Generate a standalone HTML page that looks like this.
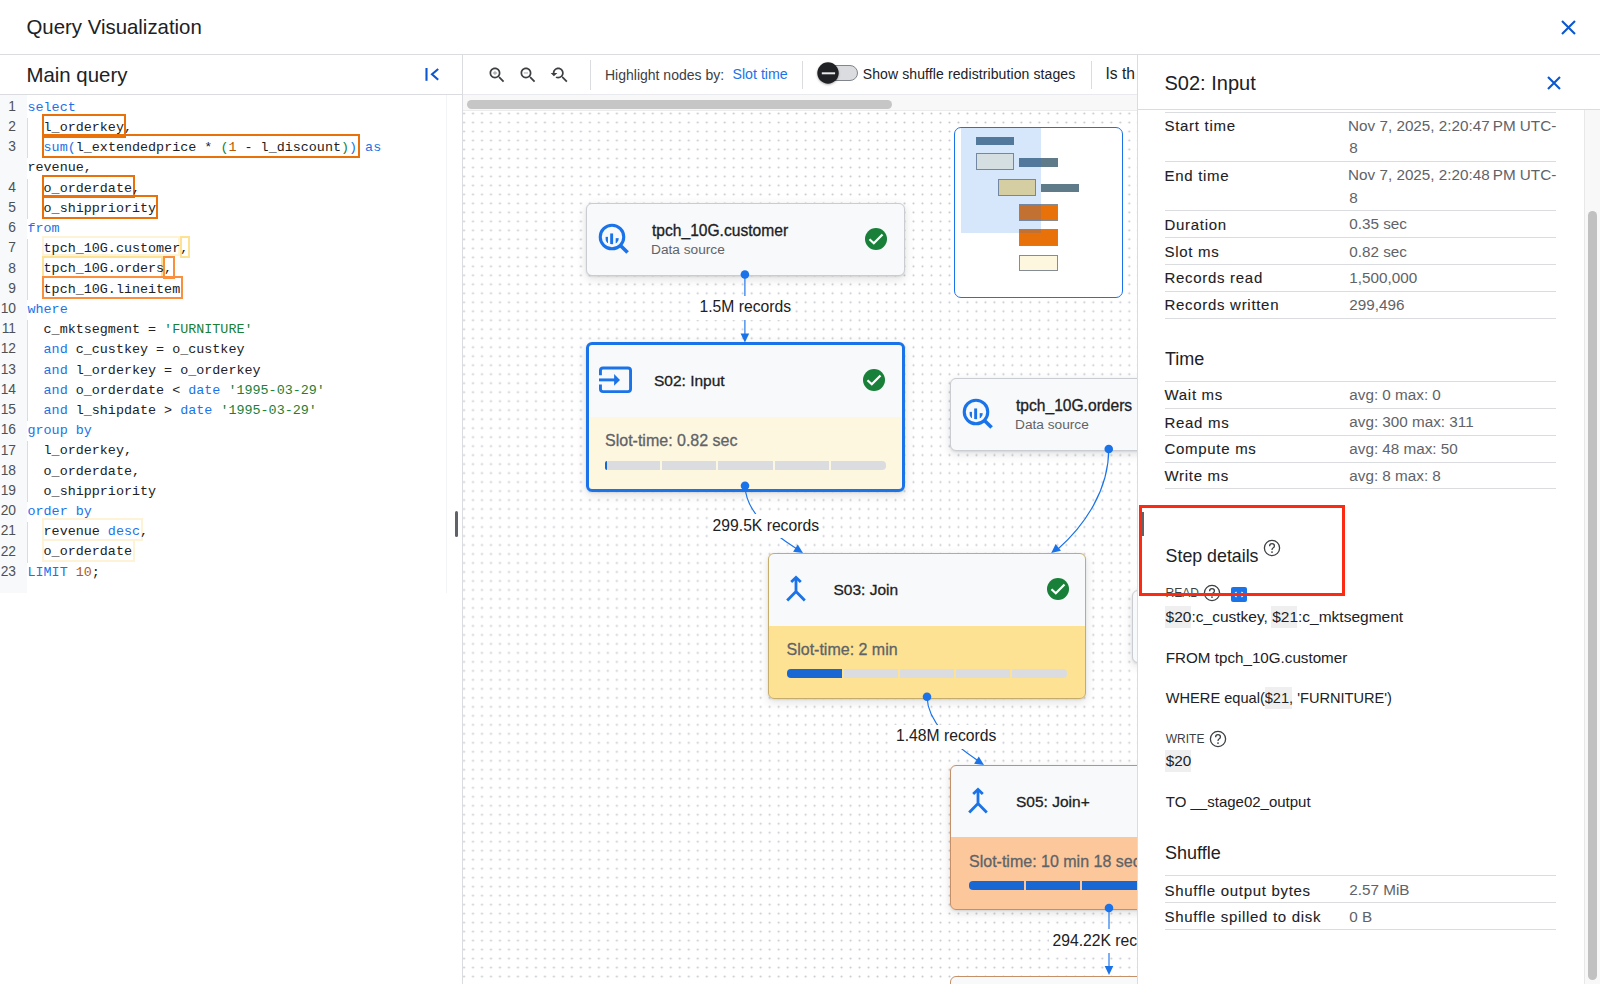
<!DOCTYPE html>
<html><head><meta charset="utf-8"><style>
*{box-sizing:border-box;margin:0;padding:0}
html,body{width:1600px;height:984px;overflow:hidden;background:#fff;font-family:"Liberation Sans",sans-serif;color:#202124;position:relative}
.t{position:absolute;white-space:pre;line-height:1}
.r{position:absolute}
svg{position:absolute;overflow:visible}
.ln{position:absolute;left:0;width:15.8px;text-align:right;font-family:"Liberation Sans",sans-serif;font-size:13.8px;color:#4d5156;line-height:20px;letter-spacing:-0.2px;margin-top:-0.8px}
.cl{position:absolute;left:27.5px;font-family:"Liberation Mono",monospace;font-size:13.4px;color:#202124;line-height:20px;white-space:pre}
.ig{position:absolute;left:27px;width:1px;background:#dadce0}
.bx{position:absolute;border:2px solid #e8710a}
.k{color:#1a73e8}.s{color:#188038}.n{color:#b55908}
</style></head><body>
<div class="r" style="left:463px;top:111px;width:674px;height:873px;background:#fff"></div>
<svg style="left:463px;top:111px" width="674" height="873"><defs><pattern id="dp" patternUnits="userSpaceOnUse" x="5.505" y="-1.995" width="8.99" height="8.99"><circle cx="4.495" cy="4.495" r="1.05" fill="#c6c9ce"/></pattern></defs><rect width="100%" height="100%" fill="url(#dp)"/></svg>
<div class="r" style="left:586.00px;top:203.00px;width:318.50px;height:73.00px;background:#f8f9fa;border:1px solid #c9ccd1;border-radius:6px;box-shadow:0 1px 2px rgba(60,64,67,.12),0 3px 8px 1px rgba(60,64,67,.13)"></div>
<svg style="left:598px;top:223px" width="32" height="32" viewBox="0 0 32 32"><defs><clipPath id="bqc612"><circle cx="14" cy="14" r="7.3"/></clipPath></defs><circle cx="14" cy="14" r="11.75" stroke="#1a73e8" stroke-width="3.1" fill="none"/><path d="M22.2 22.2L29.6 29.6" stroke="#1a73e8" stroke-width="3.6" fill="none"/><g clip-path="url(#bqc612)" fill="#1a73e8"><rect x="7.65" y="13.85" width="2.3" height="9"/><rect x="12.2" y="10.45" width="2.9" height="12"/><rect x="17.7" y="15.15" width="3" height="8"/></g></svg>
<div class="t" style="left:652.00px;top:222.79px;font-size:15.6px;color:#202124;-webkit-text-stroke:0.3px #202124">tpch_10G.customer</div>
<div class="t" style="left:651.00px;top:243.40px;font-size:13.7px;color:#5f6368">Data source</div>
<svg style="left:865.3px;top:227.7px" width="22" height="22" viewBox="0 0 22 22"><circle cx="11" cy="11" r="11" fill="#188038"/><path d="M4.5 11.2L8.8 15.3L17.5 6.5" stroke="#fff" stroke-width="2.2" fill="none"/></svg>
<div class="r" style="left:950.00px;top:378.00px;width:318.50px;height:73.00px;background:#f8f9fa;border:1px solid #c9ccd1;border-radius:6px;box-shadow:0 1px 2px rgba(60,64,67,.12),0 3px 8px 1px rgba(60,64,67,.13)"></div>
<svg style="left:962px;top:398px" width="32" height="32" viewBox="0 0 32 32"><defs><clipPath id="bqc976"><circle cx="14" cy="14" r="7.3"/></clipPath></defs><circle cx="14" cy="14" r="11.75" stroke="#1a73e8" stroke-width="3.1" fill="none"/><path d="M22.2 22.2L29.6 29.6" stroke="#1a73e8" stroke-width="3.6" fill="none"/><g clip-path="url(#bqc976)" fill="#1a73e8"><rect x="7.65" y="13.85" width="2.3" height="9"/><rect x="12.2" y="10.45" width="2.9" height="12"/><rect x="17.7" y="15.15" width="3" height="8"/></g></svg>
<div class="t" style="left:1016.00px;top:397.79px;font-size:15.6px;color:#202124;-webkit-text-stroke:0.3px #202124">tpch_10G.orders</div>
<div class="t" style="left:1015.00px;top:418.40px;font-size:13.7px;color:#5f6368">Data source</div>
<svg style="left:1229.3px;top:402.7px" width="22" height="22" viewBox="0 0 22 22"><circle cx="11" cy="11" r="11" fill="#188038"/><path d="M4.5 11.2L8.8 15.3L17.5 6.5" stroke="#fff" stroke-width="2.2" fill="none"/></svg>
<div class="r" style="left:1131.60px;top:589.50px;width:318.50px;height:73.00px;background:#f8f9fa;border:1px solid #c9ccd1;border-radius:6px;box-shadow:0 1px 2px rgba(60,64,67,.12),0 3px 8px 1px rgba(60,64,67,.13)"></div>
<svg style="left:1143.6px;top:609.5px" width="32" height="32" viewBox="0 0 32 32"><defs><clipPath id="bqc1157"><circle cx="14" cy="14" r="7.3"/></clipPath></defs><circle cx="14" cy="14" r="11.75" stroke="#1a73e8" stroke-width="3.1" fill="none"/><path d="M22.2 22.2L29.6 29.6" stroke="#1a73e8" stroke-width="3.6" fill="none"/><g clip-path="url(#bqc1157)" fill="#1a73e8"><rect x="7.65" y="13.85" width="2.3" height="9"/><rect x="12.2" y="10.45" width="2.9" height="12"/><rect x="17.7" y="15.15" width="3" height="8"/></g></svg>
<div class="t" style="left:1197.60px;top:609.29px;font-size:15.6px;color:#202124;-webkit-text-stroke:0.3px #202124">tpch_10G.lineitem</div>
<div class="t" style="left:1196.60px;top:629.90px;font-size:13.7px;color:#5f6368">Data source</div>
<svg style="left:1410.8999999999999px;top:614.2px" width="22" height="22" viewBox="0 0 22 22"><circle cx="11" cy="11" r="11" fill="#188038"/><path d="M4.5 11.2L8.8 15.3L17.5 6.5" stroke="#fff" stroke-width="2.2" fill="none"/></svg>
<div class="r" style="left:586.00px;top:342.00px;width:318.50px;height:150.00px;background:linear-gradient(#f8f9fa 0,#f8f9fa 72.2px,#fef7e0 72.2px);border:3px solid #1a73e8;border-radius:6px;box-shadow:0 1px 2px rgba(60,64,67,.12),0 3px 8px 1px rgba(60,64,67,.13)"></div>
<svg style="left:599px;top:365.7px" width="34" height="28" viewBox="0 0 34 28"><path d="M1.45 9.2V4.6Q1.45 1.95 4.1 1.95H28.9Q31.55 1.95 31.55 4.6V23Q31.55 25.65 28.9 25.65H4.1Q1.45 25.65 1.45 23V18.4" stroke="#1a73e8" stroke-width="2.9" fill="none"/><path d="M0 13.9H16.5" stroke="#1a73e8" stroke-width="2.9"/><path d="M15.1 7.9L21 13.9L15.1 19.8z" fill="#1a73e8"/></svg>
<div class="t" style="left:654.00px;top:372.88px;font-size:15.5px;color:#202124;-webkit-text-stroke:0.3px #202124">S02: Input</div>
<div class="t" style="left:605.00px;top:433.45px;font-size:16px;color:#5f6368;-webkit-text-stroke:0.3px #5f6368">Slot-time: 0.82 sec</div>
<div class="r" style="left:605.00px;top:460.60px;width:55.20px;height:9.00px;background:#dadce0;border-radius:4px 0 0 4px"></div>
<div class="r" style="left:605.00px;top:460.60px;width:1.93px;height:9.00px;background:#0b57d0;background:#1967d2;border-radius:4px 0 0 4px"></div>
<div class="r" style="left:662.20px;top:460.60px;width:54.20px;height:9.00px;background:#dadce0;border-radius:0"></div>
<div class="r" style="left:718.40px;top:460.60px;width:54.20px;height:9.00px;background:#dadce0;border-radius:0"></div>
<div class="r" style="left:774.60px;top:460.60px;width:54.20px;height:9.00px;background:#dadce0;border-radius:0"></div>
<div class="r" style="left:830.80px;top:460.60px;width:55.20px;height:9.00px;background:#dadce0;border-radius:0 4px 4px 0"></div>
<svg style="left:863.1px;top:368.7px" width="22" height="22" viewBox="0 0 22 22"><circle cx="11" cy="11" r="11" fill="#188038"/><path d="M4.5 11.2L8.8 15.3L17.5 6.5" stroke="#fff" stroke-width="2.2" fill="none"/></svg>
<div class="r" style="left:767.50px;top:553.00px;width:318.50px;height:146.00px;background:linear-gradient(#f8f9fa 0,#f8f9fa 72.4px,#fde293 72.4px);border:1px solid #c5ac6a;border-radius:6px;box-shadow:0 1px 2px rgba(60,64,67,.12),0 3px 8px 1px rgba(60,64,67,.13)"></div>
<svg style="left:783.8px;top:575px" width="24" height="30" viewBox="0 0 24 30"><path d="M12 3V17.2M12 16.4L3.2 25.4M12 16.4L20.8 25.4" stroke="#1a73e8" stroke-width="2.8" fill="none"/><path d="M7.2 6.9L12 2.4L16.8 6.9" stroke="#1a73e8" stroke-width="2.8" fill="none" stroke-linejoin="miter"/></svg>
<div class="t" style="left:833.50px;top:581.88px;font-size:15.5px;color:#202124;-webkit-text-stroke:0.3px #202124">S03: Join</div>
<div class="t" style="left:786.50px;top:642.45px;font-size:16px;color:#5f6368;-webkit-text-stroke:0.3px #5f6368">Slot-time: 2 min</div>
<div class="r" style="left:786.50px;top:669.40px;width:55.20px;height:9.00px;background:#dadce0;border-radius:4px 0 0 4px"></div>
<div class="r" style="left:786.50px;top:669.40px;width:55.20px;height:9.00px;background:#0b57d0;background:#1967d2;border-radius:4px 0 0 4px"></div>
<div class="r" style="left:843.70px;top:669.40px;width:54.20px;height:9.00px;background:#dadce0;border-radius:0"></div>
<div class="r" style="left:899.90px;top:669.40px;width:54.20px;height:9.00px;background:#dadce0;border-radius:0"></div>
<div class="r" style="left:956.10px;top:669.40px;width:54.20px;height:9.00px;background:#dadce0;border-radius:0"></div>
<div class="r" style="left:1012.30px;top:669.40px;width:55.20px;height:9.00px;background:#dadce0;border-radius:0 4px 4px 0"></div>
<svg style="left:1047.0px;top:577.7px" width="22" height="22" viewBox="0 0 22 22"><circle cx="11" cy="11" r="11" fill="#188038"/><path d="M4.5 11.2L8.8 15.3L17.5 6.5" stroke="#fff" stroke-width="2.2" fill="none"/></svg>
<div class="r" style="left:950.00px;top:765.00px;width:318.50px;height:145.00px;background:linear-gradient(#f8f9fa 0,#f8f9fa 71.3px,#fcc89b 71.3px);border:1px solid #c4906a;border-radius:6px;box-shadow:0 1px 2px rgba(60,64,67,.12),0 3px 8px 1px rgba(60,64,67,.13)"></div>
<svg style="left:966.3px;top:787px" width="24" height="30" viewBox="0 0 24 30"><path d="M12 3V17.2M12 16.4L3.2 25.4M12 16.4L20.8 25.4" stroke="#1a73e8" stroke-width="2.8" fill="none"/><path d="M7.2 6.9L12 2.4L16.8 6.9" stroke="#1a73e8" stroke-width="2.8" fill="none" stroke-linejoin="miter"/></svg>
<div class="t" style="left:1016.00px;top:793.88px;font-size:15.5px;color:#202124;-webkit-text-stroke:0.3px #202124">S05: Join+</div>
<div class="t" style="left:969.00px;top:854.45px;font-size:16px;color:#5f6368;-webkit-text-stroke:0.3px #5f6368">Slot-time: 10 min 18 sec</div>
<div class="r" style="left:969.00px;top:881.40px;width:55.20px;height:9.00px;background:#dadce0;border-radius:4px 0 0 4px"></div>
<div class="r" style="left:969.00px;top:881.40px;width:55.20px;height:9.00px;background:#0b57d0;background:#1967d2;border-radius:4px 0 0 4px"></div>
<div class="r" style="left:1026.20px;top:881.40px;width:54.20px;height:9.00px;background:#dadce0;border-radius:0"></div>
<div class="r" style="left:1026.20px;top:881.40px;width:54.20px;height:9.00px;background:#0b57d0;background:#1967d2;border-radius:0"></div>
<div class="r" style="left:1082.40px;top:881.40px;width:54.20px;height:9.00px;background:#dadce0;border-radius:0"></div>
<div class="r" style="left:1082.40px;top:881.40px;width:54.20px;height:9.00px;background:#0b57d0;background:#1967d2;border-radius:0"></div>
<div class="r" style="left:1138.60px;top:881.40px;width:54.20px;height:9.00px;background:#dadce0;border-radius:0"></div>
<div class="r" style="left:1138.60px;top:881.40px;width:54.20px;height:9.00px;background:#0b57d0;background:#1967d2;border-radius:0"></div>
<div class="r" style="left:1194.80px;top:881.40px;width:55.20px;height:9.00px;background:#dadce0;border-radius:0 4px 4px 0"></div>
<div class="r" style="left:1194.80px;top:881.40px;width:55.20px;height:9.00px;background:#0b57d0;background:#1967d2;border-radius:0 4px 4px 0"></div>
<div class="r" style="left:950.00px;top:975.50px;width:319.00px;height:124.50px;background:#f8f9fa;border:1px solid #c4906a;border-radius:6px"></div>
<svg style="left:0;top:0" width="1600" height="984" viewBox="0 0 1600 984"><path d="M744.9 274.5V336" stroke="#1a73e8" stroke-width="1.15" fill="none"/><path d="M744.90 342.50L740.60 333.50L749.20 333.50z" fill="#1a73e8"/><circle cx="744.9" cy="274.5" r="4.3" fill="#1a73e8"/><path d="M745 486C746 512 770 532 797 549" stroke="#1a73e8" stroke-width="1.15" fill="none"/><path d="M803.00 553.00L793.11 551.70L797.79 544.49z" fill="#1a73e8"/><circle cx="745" cy="485.7" r="4.3" fill="#1a73e8"/><path d="M1108.75 449C1108.75 490 1085 525 1058 549" stroke="#1a73e8" stroke-width="1.15" fill="none"/><path d="M1051.20 553.00L1055.64 544.07L1060.94 550.85z" fill="#1a73e8"/><circle cx="1108.75" cy="449" r="4.3" fill="#1a73e8"/><path d="M927 697C928 723 952 743 977 760" stroke="#1a73e8" stroke-width="1.15" fill="none"/><path d="M984.00 765.00L974.11 763.70L978.79 756.49z" fill="#1a73e8"/><circle cx="927" cy="696.8" r="4.3" fill="#1a73e8"/><path d="M1109 908V968" stroke="#1a73e8" stroke-width="1.15" fill="none"/><path d="M1109.00 975.00L1104.70 966.00L1113.30 966.00z" fill="#1a73e8"/><circle cx="1109" cy="908" r="4.3" fill="#1a73e8"/></svg>
<div class="r" style="left:695.50px;top:295.70px;width:99.00px;height:24.00px;background:#fff"></div>
<div class="t" style="left:699.50px;top:299.41px;font-size:15.7px;color:#202124">1.5M records</div>
<div class="r" style="left:708.60px;top:513.80px;width:113.00px;height:24.00px;background:#fff"></div>
<div class="t" style="left:712.60px;top:517.51px;font-size:15.7px;color:#202124">299.5K records</div>
<div class="r" style="left:892.00px;top:724.50px;width:109.00px;height:24.00px;background:#fff"></div>
<div class="t" style="left:896.00px;top:728.21px;font-size:15.7px;color:#202124">1.48M records</div>
<div class="r" style="left:1048.50px;top:929.40px;width:121.00px;height:24.00px;background:#fff"></div>
<div class="t" style="left:1052.50px;top:933.11px;font-size:15.7px;color:#202124">294.22K records</div>
<div class="r" style="left:954.00px;top:127.00px;width:168.50px;height:170.50px;background:#fff;border:1px solid #1a73e8;border-radius:7px"></div>
<div class="r" style="left:975.60px;top:136.90px;width:38.40px;height:7.90px;background:#5f7b8a;"></div>
<div class="r" style="left:975.60px;top:153.30px;width:38.40px;height:16.90px;background:#fef7e0;border:1.5px solid #858c94;"></div>
<div class="r" style="left:1019.20px;top:158.00px;width:38.60px;height:8.60px;background:#5f7b8a;"></div>
<div class="r" style="left:997.60px;top:179.20px;width:38.00px;height:16.40px;background:#fde293;border:1.5px solid #858c94;"></div>
<div class="r" style="left:1041.00px;top:183.90px;width:38.40px;height:7.90px;background:#5f7b8a;"></div>
<div class="r" style="left:1019.20px;top:204.20px;width:38.60px;height:16.40px;background:#e8710a;border:1.5px solid #858c94;"></div>
<div class="r" style="left:1019.20px;top:229.40px;width:38.60px;height:16.60px;background:#e8710a;border:1.5px solid #858c94;"></div>
<div class="r" style="left:1019.20px;top:254.80px;width:38.60px;height:16.50px;background:#fef7e0;border:1.5px solid #858c94;"></div>
<div class="r" style="left:961.00px;top:127.90px;width:80.20px;height:104.90px;background:rgba(26,115,232,.18)"></div>
<div class="r" style="left:463.00px;top:55.00px;width:674.00px;height:40.00px;background:#fff;border-bottom:1px solid #e8eaed"></div>
<div class="r" style="left:463.00px;top:95.00px;width:674.00px;height:16.00px;background:#f8f8f8;border-bottom:1px solid #ececec"></div>
<div class="r" style="left:466.50px;top:99.50px;width:425.50px;height:9.00px;background:#c6c6c6;border-radius:5px"></div>
<svg style="left:486.52px;top:65.12px" width="20.16" height="20.16" viewBox="0 0 24 24"><path d="M15.5 14h-.79l-.28-.27C15.41 12.59 16 11.11 16 9.5 16 5.91 13.09 3 9.5 3S3 5.91 3 9.5 5.91 16 9.5 16c1.61 0 3.09-.59 4.23-1.57l.27.28v.79l5 4.99L20.49 19l-4.99-5zm-6 0C7.01 14 5 11.990 5 9.5S7.01 5 9.5 5 14 7.01 14 9.5 11.99 14 9.5 14z" fill="#3c4043"/><path d="M12 10h-2v2H9v-2H7V9h2V7h1v2h2v1z" fill="#3c4043" opacity=".55"/></svg>
<svg style="left:517.92px;top:65.12px" width="20.16" height="20.16" viewBox="0 0 24 24"><path d="M15.5 14h-.79l-.28-.27C15.41 12.59 16 11.11 16 9.5 16 5.91 13.09 3 9.5 3S3 5.91 3 9.5 5.91 16 9.5 16c1.61 0 3.09-.59 4.23-1.57l.27.28v.79l5 4.99L20.49 19l-4.99-5zm-6 0C7.01 14 5 11.990 5 9.5S7.01 5 9.5 5 14 7.01 14 9.5 11.99 14 9.5 14z" fill="#3c4043"/><path d="M7 9h5v1H7z" fill="#3c4043" opacity=".55"/></svg>
<svg style="left:549.35px;top:65.12px" width="20.16" height="20.16" viewBox="0 0 24 24"><path d="M17.01 14h-.8l-.27-.27c.98-1.14 1.57-2.61 1.57-4.23 0-3.59-2.91-6.5-6.5-6.5s-6.5 3-6.5 6.5H2l3.84 4 4.16-4H6.51C6.51 7 8.53 5 11.01 5s4.5 2.01 4.5 4.5c0 2.48-2.02 4.5-4.5 4.5-.65 0-1.26-.14-1.82-.38L7.71 15.1c.97.57 2.09.9 3.3.9 1.61 0 3.08-.59 4.22-1.57l.27.27v.79l5.01 5L22 19l-4.99-5z" fill="#3c4043"/></svg>
<div class="r" style="left:589.50px;top:60.00px;width:1.00px;height:30.00px;background:#dadce0"></div>
<div class="t" style="left:605.00px;top:67.65px;font-size:14px;color:#3c4043">Highlight nodes by:</div>
<div class="t" style="left:732.50px;top:67.48px;font-size:14.2px;color:#1a73e8">Slot time</div>
<div class="r" style="left:802.00px;top:61.00px;width:1.00px;height:28.00px;background:#dadce0"></div>
<div class="r" style="left:827.00px;top:65.00px;width:30.50px;height:15.60px;background:#dadce0;border:1px solid #80868b;border-radius:8px"></div>
<svg style="left:816.4px;top:60.8px" width="24" height="24" viewBox="0 0 24 24"><circle cx="12" cy="12" r="10.7" fill="#202124" style="filter:drop-shadow(0 1px 1px rgba(0,0,0,.3))"/><path d="M5.8 12.3H19.1" stroke="#e8eaed" stroke-width="2"/></svg>
<div class="t" style="left:862.80px;top:67.15px;font-size:14px;color:#202124;letter-spacing:0.1px">Show shuffle redistribution stages</div>
<div class="r" style="left:1091.00px;top:61.00px;width:1.00px;height:28.00px;background:#dadce0"></div>
<div class="t" style="left:1105.50px;top:65.79px;font-size:15.6px;color:#202124">Is th</div>
<div class="r" style="left:0.00px;top:0.00px;width:1600.00px;height:55.00px;background:#fff;border-bottom:1px solid #dadce0"></div>
<div class="t" style="left:26.50px;top:17.13px;font-size:20.4px;color:#202124">Query Visualization</div>
<svg style="left:1561px;top:19.5px" width="15" height="15" viewBox="0 0 15 15"><path d="M1 1L14 14M14 1L1 14" stroke="#0b57d0" stroke-width="2.1" fill="none"/></svg>
<div class="r" style="left:0.00px;top:55.00px;width:463.00px;height:929.00px;background:#fff;border-right:1px solid #dadce0"></div>
<div class="t" style="left:26.50px;top:64.53px;font-size:20.4px;color:#202124">Main query</div>
<svg style="left:425.4px;top:67px" width="16" height="16" viewBox="0 0 16 16"><path d="M1.5 1V13.8" stroke="#0b57d0" stroke-width="2.1" fill="none"/><path d="M13.2 2L7 7.3L13.2 12.8" stroke="#0b57d0" stroke-width="2.1" fill="none"/></svg>
<div class="r" style="left:0.00px;top:94.00px;width:462.00px;height:1.00px;background:#dadce0"></div>
<div class="r" style="left:0.00px;top:95.00px;width:26.50px;height:497.50px;background:#f8f9fa"></div>
<div class="r" style="left:446.00px;top:95.00px;width:1.00px;height:497.50px;background:#f3f4f5"></div>
<div class="r" style="left:454.50px;top:511.00px;width:3.00px;height:26.00px;background:#5f6368;border-radius:2px"></div>
<div class="bx" style="left:41.5px;top:235.5px;width:138.0px;height:20.5px;border-color:#fef3d6"></div>
<div class="bx" style="left:41.5px;top:518px;width:101.0px;height:23px;border-color:#fef3d6"></div>
<div class="bx" style="left:41.5px;top:538.5px;width:93.0px;height:23.5px;border-color:#fef3d6"></div>
<div class="bx" style="left:179.5px;top:235.5px;width:10.5px;height:22.5px;border-color:#fde293"></div>
<div class="bx" style="left:41.5px;top:255.5px;width:121.0px;height:22.0px;border-color:#fde293"></div>
<div class="bx" style="left:41.5px;top:113.5px;width:84.0px;height:24.0px;border-color:#e8710a"></div>
<div class="bx" style="left:41.5px;top:133.5px;width:318.5px;height:24.0px;border-color:#e8710a"></div>
<div class="bx" style="left:41.5px;top:174.5px;width:93.0px;height:23.5px;border-color:#e8710a"></div>
<div class="bx" style="left:41.5px;top:195px;width:116.0px;height:23.5px;border-color:#e8710a"></div>
<div class="bx" style="left:162.5px;top:255.5px;width:12.0px;height:23.5px;border-color:#fa903e"></div>
<div class="bx" style="left:41.5px;top:275.5px;width:141.0px;height:23.5px;border-color:#fa903e"></div>
<div class="ln" style="top:97.6px">1</div>
<div class="cl" style="top:97.6px"><span class="k">select</span></div>
<div class="ln" style="top:117.8px">2</div>
<div class="cl" style="top:117.8px">  l_orderkey,</div>
<div class="ln" style="top:138.0px">3</div>
<div class="cl" style="top:138.0px">  <span class="k">sum(</span>l_extendedprice * <span class="s">(</span><span class="n">1</span> - l_discount<span class="s">)</span><span class="k">)</span> <span class="k">as</span></div>
<div class="cl" style="top:158.3px">revenue,</div>
<div class="ln" style="top:178.5px">4</div>
<div class="cl" style="top:178.5px">  o_orderdate,</div>
<div class="ln" style="top:198.7px">5</div>
<div class="cl" style="top:198.7px">  o_shippriority</div>
<div class="ln" style="top:218.9px">6</div>
<div class="cl" style="top:218.9px"><span class="k">from</span></div>
<div class="ln" style="top:239.1px">7</div>
<div class="cl" style="top:239.1px">  tpch_10G.customer,</div>
<div class="ln" style="top:259.4px">8</div>
<div class="cl" style="top:259.4px">  tpch_10G.orders,</div>
<div class="ln" style="top:279.6px">9</div>
<div class="cl" style="top:279.6px">  tpch_10G.lineitem</div>
<div class="ln" style="top:299.8px">10</div>
<div class="cl" style="top:299.8px"><span class="k">where</span></div>
<div class="ln" style="top:320.0px">11</div>
<div class="cl" style="top:320.0px">  c_mktsegment = <span class="s">'FURNITURE'</span></div>
<div class="ln" style="top:340.2px">12</div>
<div class="cl" style="top:340.2px">  <span class="k">and</span> c_custkey = o_custkey</div>
<div class="ln" style="top:360.5px">13</div>
<div class="cl" style="top:360.5px">  <span class="k">and</span> l_orderkey = o_orderkey</div>
<div class="ln" style="top:380.7px">14</div>
<div class="cl" style="top:380.7px">  <span class="k">and</span> o_orderdate &lt; <span class="k">date</span> <span class="s">'1995-03-29'</span></div>
<div class="ln" style="top:400.9px">15</div>
<div class="cl" style="top:400.9px">  <span class="k">and</span> l_shipdate &gt; <span class="k">date</span> <span class="s">'1995-03-29'</span></div>
<div class="ln" style="top:421.1px">16</div>
<div class="cl" style="top:421.1px"><span class="k">group by</span></div>
<div class="ln" style="top:441.3px">17</div>
<div class="cl" style="top:441.3px">  l_orderkey,</div>
<div class="ln" style="top:461.6px">18</div>
<div class="cl" style="top:461.6px">  o_orderdate,</div>
<div class="ln" style="top:481.8px">19</div>
<div class="cl" style="top:481.8px">  o_shippriority</div>
<div class="ln" style="top:502.0px">20</div>
<div class="cl" style="top:502.0px"><span class="k">order by</span></div>
<div class="ln" style="top:522.2px">21</div>
<div class="cl" style="top:522.2px">  revenue <span class="k">desc</span>,</div>
<div class="ln" style="top:542.4px">22</div>
<div class="cl" style="top:542.4px">  o_orderdate</div>
<div class="ln" style="top:562.7px">23</div>
<div class="cl" style="top:562.7px"><span class="k">LIMIT</span> <span class="n">10</span>;</div>
<div class="ig" style="top:117.8px;height:40.4px"></div>
<div class="ig" style="top:178.5px;height:40.4px"></div>
<div class="ig" style="top:239.1px;height:60.7px"></div>
<div class="ig" style="top:320.0px;height:101.1px"></div>
<div class="ig" style="top:441.3px;height:60.7px"></div>
<div class="ig" style="top:522.2px;height:40.4px"></div>
<div class="r" style="left:1137.00px;top:55.00px;width:463.00px;height:929.00px;background:#fff;border-left:1px solid #dadce0"></div>
<div class="t" style="left:1164.50px;top:72.67px;font-size:20px;color:#202124">S02: Input</div>
<svg style="left:1547px;top:75.5px" width="14" height="14" viewBox="0 0 14 14"><path d="M1 1L13 13M13 1L1 13" stroke="#0b57d0" stroke-width="2.1" fill="none"/></svg>
<div class="r" style="left:1138.00px;top:109.00px;width:462.00px;height:1.00px;background:#dadce0"></div>
<div class="r" style="left:1583.50px;top:110.00px;width:16.50px;height:874.00px;background:#f8f8f8;border-left:1px solid #e8e8e8"></div>
<div class="r" style="left:1587.50px;top:210.80px;width:9.50px;height:769.20px;background:#c1c1c1;border-radius:5px"></div>
<div class="r" style="left:1165.00px;top:111.50px;width:391.00px;height:1.00px;background:#dadce0"></div>
<div class="t" style="left:1164.50px;top:117.90px;font-size:15px;color:#202124;letter-spacing:0.7px;-webkit-text-stroke:0.1px #202124">Start time</div>
<div class="t" style="left:1348.10px;top:117.69px;font-size:15.25px;color:#5f6368">Nov 7, 2025, 2:20:47 PM UTC-</div>
<div class="t" style="left:1349.30px;top:139.99px;font-size:15.25px;color:#5f6368">8</div>
<div class="r" style="left:1165.00px;top:161.00px;width:391.00px;height:1.00px;background:#dadce0"></div>
<div class="t" style="left:1164.50px;top:167.50px;font-size:15px;color:#202124;letter-spacing:0.7px;-webkit-text-stroke:0.1px #202124">End time</div>
<div class="t" style="left:1348.10px;top:167.29px;font-size:15.25px;color:#5f6368">Nov 7, 2025, 2:20:48 PM UTC-</div>
<div class="t" style="left:1349.30px;top:189.59px;font-size:15.25px;color:#5f6368">8</div>
<div class="r" style="left:1165.00px;top:210.10px;width:391.00px;height:1.00px;background:#dadce0"></div>
<div class="t" style="left:1164.50px;top:216.70px;font-size:15px;color:#202124;letter-spacing:0.7px;-webkit-text-stroke:0.1px #202124">Duration</div>
<div class="t" style="left:1349.30px;top:216.49px;font-size:15.25px;color:#5f6368">0.35 sec</div>
<div class="r" style="left:1165.00px;top:237.00px;width:391.00px;height:1.00px;background:#dadce0"></div>
<div class="t" style="left:1164.50px;top:243.90px;font-size:15px;color:#202124;letter-spacing:0.7px;-webkit-text-stroke:0.1px #202124">Slot ms</div>
<div class="t" style="left:1349.30px;top:243.69px;font-size:15.25px;color:#5f6368">0.82 sec</div>
<div class="r" style="left:1165.00px;top:264.10px;width:391.00px;height:1.00px;background:#dadce0"></div>
<div class="t" style="left:1164.50px;top:270.40px;font-size:15px;color:#202124;letter-spacing:0.7px;-webkit-text-stroke:0.1px #202124">Records read</div>
<div class="t" style="left:1349.30px;top:270.19px;font-size:15.25px;color:#5f6368">1,500,000</div>
<div class="r" style="left:1165.00px;top:291.00px;width:391.00px;height:1.00px;background:#dadce0"></div>
<div class="t" style="left:1164.50px;top:297.30px;font-size:15px;color:#202124;letter-spacing:0.7px;-webkit-text-stroke:0.1px #202124">Records written</div>
<div class="t" style="left:1349.30px;top:297.09px;font-size:15.25px;color:#5f6368">299,496</div>
<div class="r" style="left:1165.00px;top:318.00px;width:391.00px;height:1.00px;background:#dadce0"></div>
<div class="t" style="left:1165.00px;top:350.16px;font-size:18px;color:#202124">Time</div>
<div class="r" style="left:1165.00px;top:380.80px;width:391.00px;height:1.00px;background:#dadce0"></div>
<div class="t" style="left:1164.50px;top:387.30px;font-size:15px;color:#202124;letter-spacing:0.7px;-webkit-text-stroke:0.1px #202124">Wait ms</div>
<div class="t" style="left:1349.30px;top:387.09px;font-size:15.25px;color:#5f6368">avg: 0 max: 0</div>
<div class="r" style="left:1165.00px;top:408.10px;width:391.00px;height:1.00px;background:#dadce0"></div>
<div class="t" style="left:1164.50px;top:414.50px;font-size:15px;color:#202124;letter-spacing:0.7px;-webkit-text-stroke:0.1px #202124">Read ms</div>
<div class="t" style="left:1349.30px;top:414.29px;font-size:15.25px;color:#5f6368">avg: 300 max: 311</div>
<div class="r" style="left:1165.00px;top:434.90px;width:391.00px;height:1.00px;background:#dadce0"></div>
<div class="t" style="left:1164.50px;top:441.30px;font-size:15px;color:#202124;letter-spacing:0.7px;-webkit-text-stroke:0.1px #202124">Compute ms</div>
<div class="t" style="left:1349.30px;top:441.09px;font-size:15.25px;color:#5f6368">avg: 48 max: 50</div>
<div class="r" style="left:1165.00px;top:461.60px;width:391.00px;height:1.00px;background:#dadce0"></div>
<div class="t" style="left:1164.50px;top:468.10px;font-size:15px;color:#202124;letter-spacing:0.7px;-webkit-text-stroke:0.1px #202124">Write ms</div>
<div class="t" style="left:1349.30px;top:467.89px;font-size:15.25px;color:#5f6368">avg: 8 max: 8</div>
<div class="r" style="left:1165.00px;top:488.40px;width:391.00px;height:1.00px;background:#dadce0"></div>
<div class="t" style="left:1165.60px;top:548.43px;font-size:17.8px;color:#202124">Step details</div>
<svg style="left:1263.4px;top:539.2px" width="18" height="18" viewBox="0 0 18 18"><circle cx="9" cy="9" r="7.6" stroke="#3c4043" stroke-width="1.3" fill="none"/><path d="M6.6 7.2Q6.6 4.7 9 4.7Q11.4 4.7 11.4 6.9Q11.4 8.2 10 9Q9 9.6 9 10.9" stroke="#3c4043" stroke-width="1.3" fill="none"/><circle cx="9" cy="13.1" r="0.9" fill="#3c4043"/></svg>
<div class="t" style="left:1165.60px;top:586.84px;font-size:12px;color:#3c4043">READ</div>
<svg style="left:1203.3px;top:584.1px" width="18" height="18" viewBox="0 0 18 18"><circle cx="9" cy="9" r="7.6" stroke="#3c4043" stroke-width="1.3" fill="none"/><path d="M6.6 7.2Q6.6 4.7 9 4.7Q11.4 4.7 11.4 6.9Q11.4 8.2 10 9Q9 9.6 9 10.9" stroke="#3c4043" stroke-width="1.3" fill="none"/><circle cx="9" cy="13.1" r="0.9" fill="#3c4043"/></svg>
<div class="r" style="left:1231.40px;top:586.50px;width:15.90px;height:15.20px;background:#1a73e8;border-radius:2px"></div>
<svg style="left:1231.4px;top:586.5px" width="16" height="15" viewBox="0 0 16 15"><path d="M5.5 5L3 7.5L5.5 10M10.5 5L13 7.5L10.5 10" stroke="#fff" stroke-width="1.15" fill="none"/></svg>
<div class="r" style="left:1165.40px;top:606.30px;width:25.70px;height:21.80px;background:#efefef"></div>
<div class="r" style="left:1271.00px;top:606.30px;width:25.80px;height:21.80px;background:#efefef"></div>
<div class="t" style="left:1165.60px;top:609.08px;font-size:15.5px;color:#202124">$20:c_custkey, $21:c_mktsegment</div>
<div class="t" style="left:1165.80px;top:649.93px;font-size:15.2px;color:#202124">FROM tpch_10G.customer</div>
<div class="r" style="left:1265.40px;top:687.30px;width:26.50px;height:22.20px;background:#efefef"></div>
<div class="t" style="left:1165.80px;top:691.04px;font-size:14.6px;color:#202124">WHERE equal($21, 'FURNITURE')</div>
<div class="t" style="left:1165.80px;top:732.74px;font-size:12px;color:#3c4043">WRITE</div>
<svg style="left:1208.6px;top:730.1px" width="18" height="18" viewBox="0 0 18 18"><circle cx="9" cy="9" r="7.6" stroke="#3c4043" stroke-width="1.3" fill="none"/><path d="M6.6 7.2Q6.6 4.7 9 4.7Q11.4 4.7 11.4 6.9Q11.4 8.2 10 9Q9 9.6 9 10.9" stroke="#3c4043" stroke-width="1.3" fill="none"/><circle cx="9" cy="13.1" r="0.9" fill="#3c4043"/></svg>
<div class="r" style="left:1165.40px;top:750.10px;width:25.70px;height:22.40px;background:#efefef"></div>
<div class="t" style="left:1165.80px;top:753.15px;font-size:15.3px;color:#202124">$20</div>
<div class="t" style="left:1165.80px;top:793.90px;font-size:15px;color:#202124">TO __stage02_output</div>
<div class="t" style="left:1165.00px;top:844.36px;font-size:18px;color:#202124">Shuffle</div>
<div class="r" style="left:1165.00px;top:874.80px;width:391.00px;height:1.00px;background:#dadce0"></div>
<div class="t" style="left:1164.50px;top:882.50px;font-size:15px;color:#202124;letter-spacing:0.7px;-webkit-text-stroke:0.1px #202124">Shuffle output bytes</div>
<div class="t" style="left:1349.30px;top:882.29px;font-size:15.25px;color:#5f6368">2.57 MiB</div>
<div class="r" style="left:1165.00px;top:901.70px;width:391.00px;height:1.00px;background:#dadce0"></div>
<div class="t" style="left:1164.50px;top:908.80px;font-size:15px;color:#202124;letter-spacing:0.7px;-webkit-text-stroke:0.1px #202124">Shuffle spilled to disk</div>
<div class="t" style="left:1349.30px;top:908.59px;font-size:15.25px;color:#5f6368">0 B</div>
<div class="r" style="left:1165.00px;top:929.00px;width:391.00px;height:1.00px;background:#dadce0"></div>
<div class="r" style="left:1142.30px;top:511.90px;width:1.90px;height:23.80px;background:#5f6368"></div>
<div class="r" style="left:1139.00px;top:505.00px;width:205.50px;height:91.40px;border:3.2px solid #fb2a12"></div>
</body></html>
